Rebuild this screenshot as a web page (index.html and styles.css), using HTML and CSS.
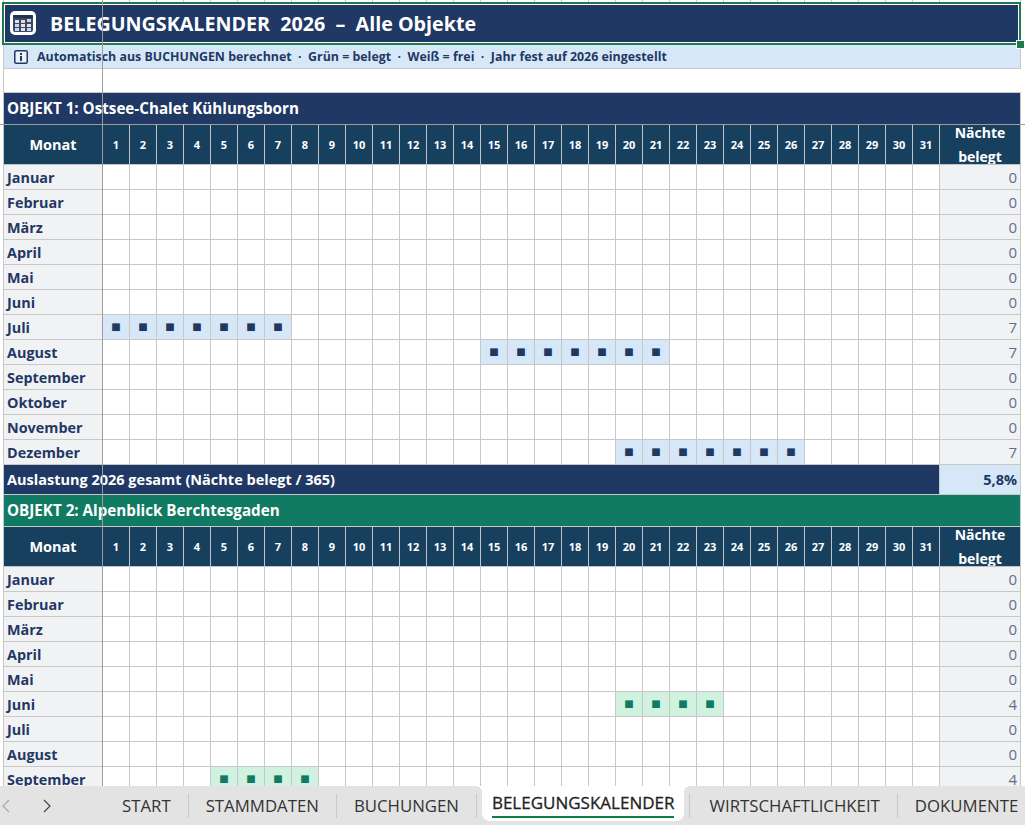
FILE: index.html
```html
<!DOCTYPE html>
<html lang="de">
<head>
    <meta charset="UTF-8">
    <title>Belegungskalender 2026</title>

    <link rel="stylesheet" href="styles.css">
</head>
<body>

<div class="sheet">
    <table class="grid">
        <colgroup class="grid__cols"></colgroup>
        <tbody class="grid__body">
            <tr class="row-top"></tr>
            <tr class="row-title">
                <td colspan="33" class="title">
                    <div class="title__inner">
                        <svg class="title__icon" width="26" height="24" viewBox="0 0 26 24">
                            <rect width="26" height="24" rx="5" fill="#fff"/>
                            <rect x="3" y="4" width="20" height="17" rx="2" fill="#3a4a66"/>
                            <rect x="3" y="4" width="20" height="3" rx="1" fill="#27324a"/>
                            <rect x="5" y="9" width="4" height="3" fill="#dfe3ea"/>
                            <rect x="11" y="9" width="4" height="3" fill="#e8d9c8"/>
                            <rect x="17" y="8" width="4" height="3" fill="#c6d6ec"/>
                            <rect x="5" y="13" width="4" height="3" fill="#cfd6e2"/>
                            <rect x="11" y="13" width="4" height="3" fill="#f0e4d8"/>
                            <rect x="17" y="13" width="4" height="3" fill="#dfe3ea"/>
                            <rect x="5" y="17" width="4" height="3" fill="#c6d6ec"/>
                            <rect x="11" y="17" width="4" height="3" fill="#dfe3ea"/>
                            <rect x="17" y="17" width="4" height="3" fill="#cfd6e2"/>
                        </svg>
                        <span>BELEGUNGSKALENDER  2026  –  Alle Objekte</span>
                    </div>
                </td>
            </tr>
            <tr class="row-info">
                <td colspan="33" class="info">
                    <div class="info__inner">
                        <svg class="info__icon" width="14" height="14" viewBox="0 0 14 14">
                            <rect x="0.75" y="0.75" width="12.5" height="12.5" rx="1.5" fill="#eaf3fb" stroke="#1f3864" stroke-width="1.5"/>
                            <rect x="6" y="3" width="2" height="2" fill="#1f3864"/>
                            <rect x="6" y="6" width="2" height="5" fill="#1f3864"/>
                        </svg>
                        <span>Automatisch aus BUCHUNGEN berechnet  ·  Grün = belegt  ·  Weiß = frei  ·  Jahr fest auf 2026 eingestellt</span>
                    </div>
                </td>
            </tr>
            <tr class="row-blank"><td colspan="33" class="blank"></td></tr>
        </tbody>
    </table>

    <!-- markierte zelle + fixierung -->
    <div class="selection"><span class="selection__handle"></span></div>
    <div class="freeze freeze--col"></div>
    <div class="freeze freeze--row"></div>
</div>

<div class="tabbar">
    <div class="tabbar__nav">
        <svg class="tabbar__arrow" width="8" height="14" viewBox="0 0 8 14"><path d="M7 1 L1 7 L7 13" fill="none" stroke="#a8a8a8" stroke-width="1.2"/></svg>
        <svg class="tabbar__arrow" width="8" height="14" viewBox="0 0 8 14"><path d="M1 1 L7 7 L1 13" fill="none" stroke="#444" stroke-width="1.2"/></svg>
    </div>
    <div class="tab">START</div>
    <div class="tab">STAMMDATEN</div>
    <div class="tab">BUCHUNGEN</div>
    <div class="tab tab--active"><span class="tab__label">BELEGUNGSKALENDER</span></div>
    <div class="tab tab--after-active">WIRTSCHAFTLICHKEIT</div>
    <div class="tab tab--last">DOKUMENTE</div>
</div>

<script src="script.js"></script>
</body>
</html>
```

FILE: styles.css
```css
*{
    box-sizing: border-box;
}
html,
body{
    margin: 0;
    height: 825px;
    overflow: hidden;
    background-color: #fff;
}
body{
    font-family: "Open Sans", "Noto Sans", sans-serif;
    color: #1f3864;
}
.sheet{
    position: relative;
    height: 786px;
    overflow: hidden;
    padding-left: 3px;
}
.grid{
    border-collapse: separate;
    border-spacing: 0;
    table-layout: fixed;
    width: 1018px;
    border-left: 1px solid #c8c8c8;
}
.grid td{
    padding: 0;
    border-right: 1px solid #c8c8c8;
    border-bottom: 1px solid #c8c8c8;
}
.col-month{
    width: 99px;
}
.col-day{
    width: 27px;
}
.col-sum{
    width: 81px;
}
.row-top td{
    height: 3px;
    border-bottom: none;
    line-height: 0;
}
.row-title td{
    height: 42px;
}
.title{
    background-color: #1f3864;
    color: #fff;
    font-size: 19.7px;
    font-weight: 700;
}
.title__inner{
    display: flex;
    align-items: center;
    gap: 14px;
    padding-left: 6px;
    white-space: pre;
}
.title__icon{
    margin-bottom: 2px;
}
.row-info td{
    height: 24px;
}
.info{
    background-color: #d6e8f7;
    font-size: 12.4px;
    font-weight: 700;
}
.info__inner{
    display: flex;
    align-items: center;
    gap: 9px;
    padding-left: 10px;
    white-space: pre;
}
.row-blank td{
    height: 24px;
    border-right: none;
}
.object td{
    height: 32px;
    padding: 0 0 2px 3px;
    color: #fff;
    font-size: 15.2px;
    font-weight: 700;
}
.object--navy td{
    background-color: #1f3864;
}
.object--green td{
    background-color: #107a62;
}
.head td{
    height: 40px;
    background-color: #17405f;
    color: #fff;
    font-weight: 700;
    text-align: center;
    border-color: #c0c4c8;
}
.head__month{
    font-size: 14.5px;
}
.head__day{
    font-size: 11px;
}
.head__sum{
    font-size: 14px;
}
.head__clip{
    height: 39px;
    overflow: hidden;
}
.head__text{
    display: block;
    margin-top: -4px;
    line-height: 24px;
}
.month td{
    height: 25px;
}
.month__name{
    padding-left: 3px !important;
    background-color: #f1f2f4;
    font-size: 14.4px;
    font-weight: 700;
}
.month__sum{
    padding-right: 3px !important;
    background-color: #f1f2f4;
    color: #5f6f8c;
    font-size: 15px;
    text-align: right;
}
.month__day{
    font-family: "DejaVu Sans", sans-serif;
    font-size: 10px;
    text-align: center;
    line-height: 1;
}
.month__day--navy{
    background-color: #d6e8f7;
    color: #1f3864;
}
.month__day--green{
    background-color: #d1f2e0;
    color: #107a62;
}
.total td{
    height: 30px;
}
.total__label{
    padding-left: 3px !important;
    background-color: #1f3864;
    color: #fff;
    font-size: 14.5px;
    font-weight: 700;
}
.total__value{
    padding-right: 3px !important;
    background-color: #d6e8f7;
    font-size: 14.5px;
    font-weight: 700;
    text-align: right;
}
.selection{
    position: absolute;
    left: 2px;
    top: 2px;
    width: 1019px;
    height: 43px;
    border: 2px solid #1f7a4d;
    box-shadow: inset 0 0 0 1px #fff;
}
.selection__handle{
    position: absolute;
    right: -5px;
    bottom: -5px;
    width: 7px;
    height: 7px;
    background-color: #1f7a4d;
    outline: 1px solid #fff;
}
.freeze{
    position: absolute;
    background-color: #9c9c9c;
}
.freeze--col{
    left: 102px;
    top: 0;
    width: 1px;
    height: 786px;
}
.freeze--row{
    left: 0;
    top: 124px;
    width: 1025px;
    height: 1px;
}
.tabbar{
    display: flex;
    align-items: center;
    height: 39px;
    background-color: #e3e3e3;
    font-size: 16.8px;
    color: #333;
}
.tabbar__nav{
    display: flex;
    flex-shrink: 0;
    align-items: center;
    gap: 33px;
    width: 105px;
    padding-left: 2px;
}
.tab{
    position: relative;
    display: flex;
    flex-shrink: 0;
    align-items: center;
    height: 24px;
    padding: 0 17px;
    border-right: 1px solid #c8c8c8;
    white-space: nowrap;
}
.tab--active{
    align-self: flex-start;
    height: 35px;
    margin: 0 5px 0 5px;
    padding: 0 10px;
    background-color: #fff;
    border-right: none;
    border-radius: 0 0 8px 8px;
    color: #222;
    font-size: 17px;
}
.tab--active::before,
.tab--active::after{
    content: '';
    position: absolute;
    top: 0;
    width: 6px;
    height: 6px;
}
.tab--active::before{
    left: -6px;
    background: radial-gradient(circle at 0 100%, transparent 6px, #fff 6px);
}
.tab--active::after{
    right: -6px;
    background: radial-gradient(circle at 100% 100%, transparent 6px, #fff 6px);
}
.tab__label{
    display: flex;
    align-items: center;
    height: 32px;
    margin-bottom: 3px;
    padding-top: 2px;
    border-bottom: 2px solid #107c41;
    -webkit-text-stroke: 0.3px #222;
}
.tab--after-active{
    padding-left: 19px;
    border-left: 1px solid #c8c8c8;
}
.tab--last{
    border-right: none;
}
```

FILE: script.js
```js
window.onload = function () {

    const MONTHS = ['Januar', 'Februar', 'März', 'April', 'Mai', 'Juni', 'Juli', 'August', 'September', 'Oktober', 'November', 'Dezember'];

    const objects = [
        {
            name: 'OBJEKT 1: Ostsee-Chalet Kühlungsborn',
            color: 'navy',
            rows: 12,
            total: '5,8%',
            booked: {6: [1, 7], 7: [15, 21], 11: [20, 26]}
        },
        {
            name: 'OBJEKT 2: Alpenblick Berchtesgaden',
            color: 'green',
            rows: 9, // rest liegt unter der tableiste
            booked: {5: [20, 23], 8: [5, 8]}
        }
    ];

    const body = document.querySelector('.grid__body');
    const cols = document.querySelector('.grid__cols');
    const top = document.querySelector('.row-top');

    function addRow(className, html) {
        let tr = document.createElement('tr');
        tr.className = className;
        tr.innerHTML = html;
        body.appendChild(tr);
    }

    function getDayCells(fn) {
        let html = '';
        for (let d = 1; d <= 31; d++) {
            html += fn(d);
        }
        return html;
    }

    // spalten und oberste zeile
    cols.innerHTML = '<col class="col-month">' + getDayCells(function () {
        return '<col class="col-day">';
    }) + '<col class="col-sum">';
    top.innerHTML = '<td></td>' + getDayCells(function () {
        return '<td></td>';
    }) + '<td></td>';

    objects.forEach(function (obj) {
        addRow('object object--' + obj.color, '<td colspan="33">' + obj.name + '</td>');

        addRow('head', '<td class="head__month">Monat</td>' + getDayCells(function (d) {
            return '<td class="head__day">' + d + '</td>';
        }) + '<td class="head__sum"><div class="head__clip"><span class="head__text">Nächte<br>belegt</span></div></td>');

        for (let m = 0; m < obj.rows; m++) {
            let range = obj.booked[m];
            let nights = range ? range[1] - range[0] + 1 : 0;
            let days = getDayCells(function (d) {
                if (range && d >= range[0] && d <= range[1]) {
                    return '<td class="month__day month__day--' + obj.color + '">■</td>';
                }
                return '<td class="month__day"></td>';
            });
            addRow('month', '<td class="month__name">' + MONTHS[m] + '</td>' + days + '<td class="month__sum">' + nights + '</td>');
        }

        if (obj.total) {
            addRow('total', '<td colspan="32" class="total__label">Auslastung 2026 gesamt (Nächte belegt / 365)</td><td class="total__value">' + obj.total + '</td>');
        }
    });
};
```
